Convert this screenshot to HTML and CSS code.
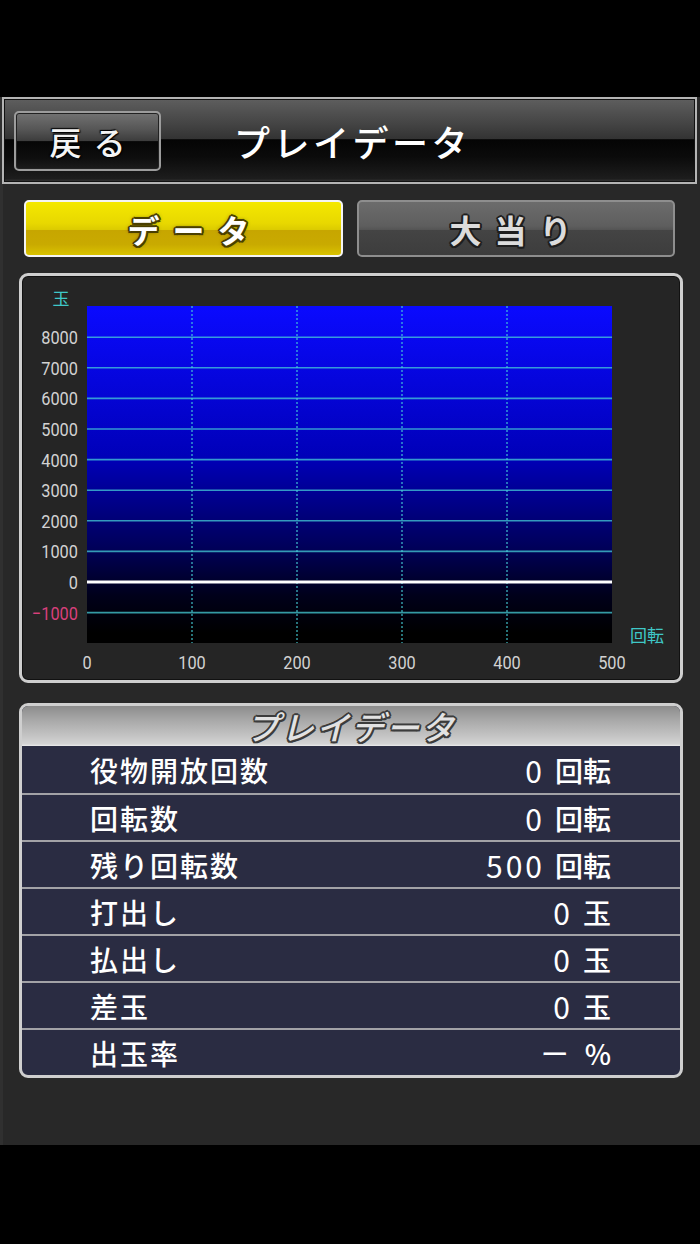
FILE: index.html
```html
<!DOCTYPE html>
<html lang="ja">
<head>
<meta charset="utf-8">
<title>プレイデータ</title>
<link rel="stylesheet" href="styles.css">
</head>
<body>
<div class="topbar"></div>
<div class="app">
  <header class="header">
    <div class="back">戻る</div>
    <h1 class="title">プレイデータ</h1>
  </header>
  <div class="tabs">
    <div class="tab tab-active">データ</div>
    <div class="tab tab-inactive">大当り</div>
  </div>
  <div class="chart">
    <svg class="plot" width="658" height="404" viewBox="0 0 658 404">
      <defs>
        <linearGradient id="bg" x1="0" y1="0" x2="0" y2="1">
          <stop offset="0" stop-color="#0a0aff"/>
          <stop offset="0.45" stop-color="#0000b8"/>
          <stop offset="0.72" stop-color="#000058"/>
          <stop offset="0.86" stop-color="#00001a"/>
          <stop offset="0.97" stop-color="#000000"/>
        </linearGradient>
      </defs>
      <rect x="65" y="30" width="525" height="337" fill="url(#bg)"/>
      <g class="hgrid">
        <line x1="65" x2="590" y1="61.2" y2="61.2"/>
        <line x1="65" x2="590" y1="91.8" y2="91.8"/>
        <line x1="65" x2="590" y1="122.4" y2="122.4"/>
        <line x1="65" x2="590" y1="153" y2="153"/>
        <line x1="65" x2="590" y1="183.6" y2="183.6"/>
        <line x1="65" x2="590" y1="214.2" y2="214.2"/>
        <line x1="65" x2="590" y1="244.8" y2="244.8"/>
        <line x1="65" x2="590" y1="275.4" y2="275.4"/>
        <line x1="65" x2="590" y1="336.6" y2="336.6"/>
      </g>
      <g class="vgrid">
        <line x1="170" x2="170" y1="30" y2="367"/>
        <line x1="275" x2="275" y1="30" y2="367"/>
        <line x1="380" x2="380" y1="30" y2="367"/>
        <line x1="485" x2="485" y1="30" y2="367"/>
      </g>
      <line class="zero" x1="65" x2="590" y1="306" y2="306"/>
      <text class="unit" x="39" y="29" text-anchor="middle">玉</text>
      <g class="ylab" text-anchor="end" transform="scale(0.86 1)">
        <text x="65.1" y="68.2">8000</text>
        <text x="65.1" y="98.8">7000</text>
        <text x="65.1" y="129.4">6000</text>
        <text x="65.1" y="160">5000</text>
        <text x="65.1" y="190.6">4000</text>
        <text x="65.1" y="221.2">3000</text>
        <text x="65.1" y="251.8">2000</text>
        <text x="65.1" y="282.4">1000</text>
        <text x="65.1" y="313">0</text>
        <text class="neg" x="65.1" y="343.6">−1000</text>
      </g>
      <g class="xlab" text-anchor="middle" transform="scale(0.86 1)">
        <text x="75.6" y="393">0</text>
        <text x="197.7" y="393">100</text>
        <text x="319.8" y="393">200</text>
        <text x="441.9" y="393">300</text>
        <text x="564" y="393">400</text>
        <text x="686" y="393">500</text>
      </g>
      <text class="unit" x="625" y="366" text-anchor="middle">回転</text>
    </svg>
  </div>
  <div class="table">
    <div class="table-head">プレイデータ</div>
    <div class="row"><span class="label">役物開放回数</span><span class="value"><span class="num">0</span><span class="u">回転</span></span></div>
    <div class="row"><span class="label">回転数</span><span class="value"><span class="num">0</span><span class="u">回転</span></span></div>
    <div class="row"><span class="label">残り回転数</span><span class="value"><span class="num">500</span><span class="u">回転</span></span></div>
    <div class="row"><span class="label">打出し</span><span class="value"><span class="num">0</span><span class="u">玉</span></span></div>
    <div class="row"><span class="label">払出し</span><span class="value"><span class="num">0</span><span class="u">玉</span></span></div>
    <div class="row"><span class="label">差玉</span><span class="value"><span class="num">0</span><span class="u">玉</span></span></div>
    <div class="row"><span class="label">出玉率</span><span class="value"><span class="num dash">ー</span><span class="u">%</span></span></div>
  </div>
</div>
</body>
</html>
```

FILE: styles.css
```css
html, body {
  margin: 0;
  padding: 0;
}

body {
  background: #000;
  width: 700px;
  height: 1244px;
  overflow: hidden;
  font-family: "Noto Sans CJK JP", "Noto Sans", sans-serif;
  color: #fff;
}

.topbar {
  height: 97px;
}

.app {
  height: 1048px;
  background: #282828;
  box-shadow: inset 3px 0 0 #303030;
  display: flex;
  flex-direction: column;
}

.header {
  box-sizing: border-box;
  height: 87px;
  margin: 0 3px 0 2px;
  border: 2px solid #b4b4b4;
  box-shadow: inset 0 0 0 1px #111;
  background: linear-gradient(to bottom, #5e5e5e 0%, #444 30%, #333 48%, #040404 49%, #0b0b0b 70%, #1d1d1d 96%, #3a3a3a 100%);
  display: flex;
  align-items: center;
}

.back {
  box-sizing: border-box;
  width: 147px;
  height: 60px;
  margin-left: 10px;
  border: 2px solid #9c9c9c;
  border-radius: 5px;
  box-shadow: inset 0 0 0 1px #222;
  background: linear-gradient(to bottom, #727272 0%, #555 30%, #3c3c3c 50%, #060606 51%, #0e0e0e 80%, #1c1c1c 100%);
  display: flex;
  align-items: center;
  justify-content: center;
  font-size: 32px;
  font-weight: 500;
  letter-spacing: 12px;
  padding-left: 12px;
  color: #f4f4f4;
  text-shadow: 0 0 2px #000, 1px 1px 1px #000, -1px -1px 1px #000;
}

.title {
  margin: 0 0 0 73px;
  font-size: 36px;
  font-weight: 500;
  letter-spacing: 3.5px;
  color: #fff;
  line-height: 1;
}

.tabs {
  display: grid;
  grid-template-columns: 319px 318px;
  gap: 14px;
  margin: 16px 0 0 24px;
  height: 57px;
}

.tab {
  box-sizing: border-box;
  border-radius: 5px;
  display: flex;
  align-items: center;
  justify-content: center;
  font-size: 32px;
  font-weight: 700;
  letter-spacing: 13px;
}

.tab-active {
  padding-left: 23px;
  border: 2px solid #f4f4f4;
  background: linear-gradient(to bottom, #f4e800 0%, #e8d800 40%, #dccb00 52%, #c7a600 53%, #c9aa00 80%, #d9c300 100%);
  color: #fff;
  text-shadow: 2px 0 0 #4a3f00, -2px 0 0 #4a3f00, 0 2px 0 #4a3f00, 0 -2px 0 #4a3f00, 1.5px 1.5px 0 #4a3f00, -1.5px -1.5px 0 #4a3f00, 1.5px -1.5px 0 #4a3f00, -1.5px 1.5px 0 #4a3f00, 0 0 4px #3a3000;
}

.tab-inactive {
  padding-left: 2px;
  border: 2px solid #8e8e8e;
  background: linear-gradient(to bottom, #6c6c6c 0%, #5e5e5e 45%, #555 52%, #444 53%, #3d3d3d 100%);
  color: #dcdcdc;
  text-shadow: 2px 0 0 #1e1e1e, -2px 0 0 #1e1e1e, 0 2px 0 #1e1e1e, 0 -2px 0 #1e1e1e, 1.5px 1.5px 0 #1e1e1e, -1.5px -1.5px 0 #1e1e1e, 1.5px -1.5px 0 #1e1e1e, -1.5px 1.5px 0 #1e1e1e;
}

.chart {
  box-sizing: border-box;
  width: 664px;
  height: 410px;
  margin: 16px 0 0 19px;
  border: 3px solid #cfcfcf;
  border-radius: 9px;
  background: #252525;
  box-shadow: inset 0 0 0 1px #111;
}

.plot {
  display: block;
}

.hgrid line {
  stroke: rgba(70, 205, 215, 0.75);
  stroke-width: 1.6;
}

.vgrid line {
  stroke: rgba(70, 205, 215, 0.75);
  stroke-width: 1.5;
  stroke-dasharray: 2 2;
}

.zero {
  stroke: #fff;
  stroke-width: 3;
}

.ylab text,
.xlab text {
  font-family: Roboto, "Liberation Sans", sans-serif;
  font-size: 19px;
  fill: #d2d2d2;
}

.ylab .neg {
  fill: #d8407c;
}

.unit {
  font-family: "Noto Sans CJK JP", sans-serif;
  font-size: 17px;
  fill: #3fc8c8;
}

.table {
  box-sizing: border-box;
  width: 664px;
  margin: 20px 0 0 19px;
  border: 3px solid #cfcfcf;
  border-radius: 9px;
  overflow: hidden;
  background: #2a2c42;
}

.table-head {
  height: 40px;
  box-sizing: border-box;
  background: linear-gradient(to bottom, #8c8c8c 0%, #a8a8a8 35%, #c4c4c4 75%, #d4d4d4 95%, #ececec 100%);
  display: flex;
  align-items: center;
  justify-content: center;
  font-size: 33px;
  line-height: 1;
  font-weight: 500;
  font-style: italic;
  letter-spacing: 2px;
  color: #e2e2e2;
  text-shadow: 2px 0 0 #3c3c3c, -2px 0 0 #3c3c3c, 0 2px 0 #3c3c3c, 0 -2px 0 #3c3c3c, 1.5px 1.5px 0 #3c3c3c, -1.5px -1.5px 0 #3c3c3c, 1.5px -1.5px 0 #3c3c3c, -1.5px 1.5px 0 #3c3c3c;
}

.row {
  box-sizing: border-box;
  height: 47px;
  display: flex;
  align-items: center;
  justify-content: space-between;
  padding: 0 69px 0 68px;
  font-size: 28px;
  font-weight: 500;
  color: #fff;
}

.row + .row {
  border-top: 2px solid #a2a2a6;
}

.label {
  letter-spacing: 2px;
}

.value {
  display: flex;
  align-items: center;
  gap: 10px;
}

.num {
  font-size: 30px;
  font-weight: 400;
  letter-spacing: 3px;
  line-height: 1;
}

.num.dash {
  font-size: 28px;
  letter-spacing: 0;
  margin-right: 6px;
}
```
